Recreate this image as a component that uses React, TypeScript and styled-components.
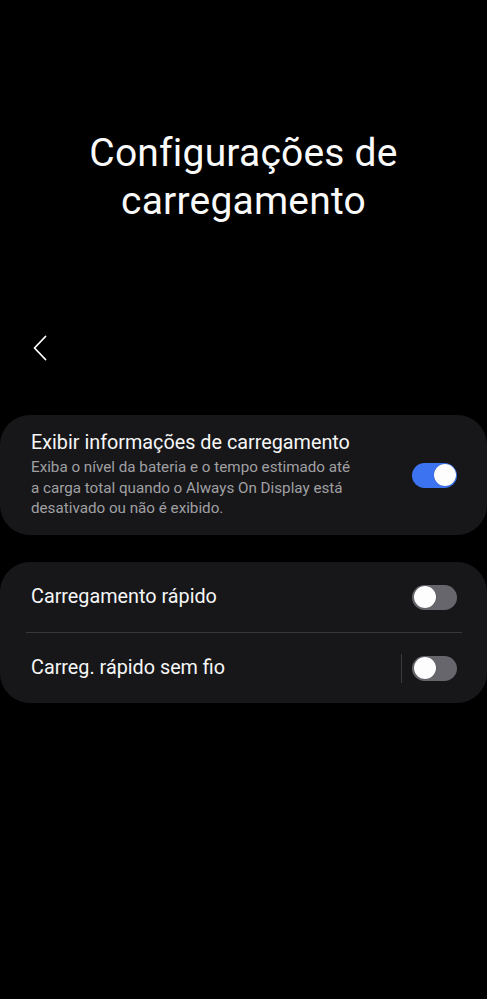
import React, { useState } from "react";
import styled, { createGlobalStyle } from "styled-components";

const GlobalStyle = createGlobalStyle`
  * {
    box-sizing: border-box;
    margin: 0;
    padding: 0;
  }
  html, body {
    background: #000;
  }
  body {
    font-family: Roboto, "Noto Sans", sans-serif;
    color: #fafafa;
    min-height: 999px;
  }
`;

const Page = styled.div`
  display: flex;
  flex-direction: column;
`;

const Title = styled.h1`
  font-size: 39px;
  font-weight: 400;
  line-height: 48px;
  text-align: center;
  padding: 129px 30px 0;
  letter-spacing: 0.2px;
`;

const BackButton = styled.button`
  display: flex;
  align-items: center;
  justify-content: center;
  width: 48px;
  height: 48px;
  margin: 99px 0 0 16px;
  background: none;
  border: none;
  color: #fff;
`;

const Card = styled.section<{ $gap?: number }>`
  background: #17171a;
  border-radius: 30px;
  margin-top: ${(p) => p.$gap ?? 0}px;
  padding: 0 30px 0 31px;
  display: flex;
  flex-direction: column;
`;

const Row = styled.div<{ $height: number }>`
  display: flex;
  align-items: center;
  gap: 12px;
  min-height: ${(p) => p.$height}px;
`;

const Divider = styled.div`
  height: 1px;
  background: #38383b;
  margin: 0 -5px;
`;

const TextBlock = styled.div`
  flex: 1;
  display: flex;
  flex-direction: column;
  gap: 2px;
`;

const Label = styled.div`
  font-size: 19.8px;
  line-height: 24px;
  color: #f6f6f6;
`;

const Description = styled.div`
  font-size: 15.2px;
  line-height: 20.5px;
  color: #a0a0a3;
  max-width: 326px;
`;

const VerticalRule = styled.div`
  width: 1px;
  height: 29px;
  background: #3c3c3f;
  margin-right: -2px;
`;

const Track = styled.button<{ $on: boolean }>`
  position: relative;
  flex: none;
  width: 45px;
  height: 25px;
  border: none;
  border-radius: 13px;
  background: ${(p) => (p.$on ? "#3b73f0" : "#67666c")};
  cursor: pointer;
`;

const Knob = styled.span<{ $on: boolean }>`
  position: absolute;
  top: 1.5px;
  left: ${(p) => (p.$on ? "21.5px" : "1.5px")};
  width: 22px;
  height: 22px;
  border-radius: 50%;
  background: #fdfdfd;
  box-shadow: 0 0 1px rgba(0, 0, 0, 0.4);
`;

const Toggle = ({ on, onChange }: { on: boolean; onChange: () => void }) => (
  <Track $on={on} onClick={onChange} aria-pressed={on}>
    <Knob $on={on} />
  </Track>
);

export default function App() {
  const [info, setInfo] = useState(true);
  const [fast, setFast] = useState(false);
  const [wireless, setWireless] = useState(false);

  return (
    <Page>
      <GlobalStyle />
      <Title>
        Configurações de
        <br />
        carregamento
      </Title>
      <BackButton aria-label="Voltar">
        <svg width="14" height="26" viewBox="0 0 14 26" fill="none">
          <path d="M12.5 1.5 L1.5 13 L12.5 24.5" stroke="#fff" strokeWidth="1.8" strokeLinecap="round" strokeLinejoin="round" />
        </svg>
      </BackButton>
      <Card $gap={43}>
        <Row $height={120}>
          <TextBlock>
            <Label>Exibir informações de carregamento</Label>
            <Description>
              Exiba o nível da bateria e o tempo estimado até a carga total quando o Always On Display está desativado ou não é exibido.
            </Description>
          </TextBlock>
          <Toggle on={info} onChange={() => setInfo(!info)} />
        </Row>
      </Card>
      <Card $gap={27}>
        <Row $height={70}>
          <TextBlock>
            <Label>Carregamento rápido</Label>
          </TextBlock>
          <Toggle on={fast} onChange={() => setFast(!fast)} />
        </Row>
        <Divider />
        <Row $height={70}>
          <TextBlock>
            <Label>Carreg. rápido sem fio</Label>
          </TextBlock>
          <VerticalRule />
          <Toggle on={wireless} onChange={() => setWireless(!wireless)} />
        </Row>
      </Card>
    </Page>
  );
}
